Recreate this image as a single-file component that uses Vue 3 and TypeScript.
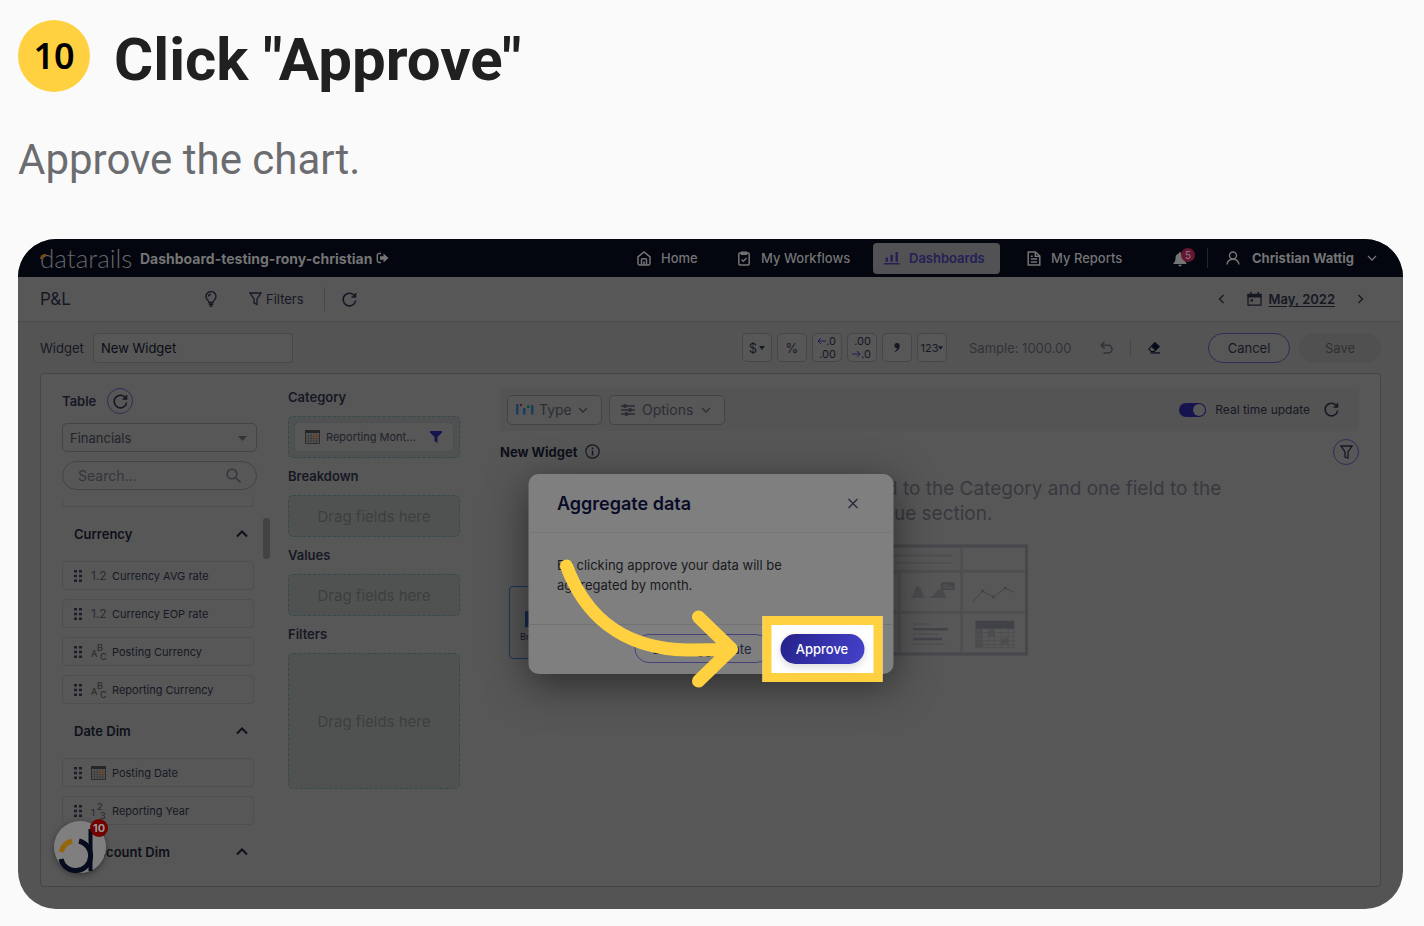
<script setup lang="ts">
import { ref } from 'vue'

type FieldKind = 'decimal' | 'text' | 'date' | 'number'
interface Field { name: string; kind: FieldKind }
interface Group { name: string; fields: Field[] }
interface Zone { name: string; field?: string; tall?: boolean }

const widgetName = ref('New Widget')
const table = ref('Financials')
const search = ref('')
const realTime = ref(true)

const groups: Group[] = [
  {
    name: 'Currency',
    fields: [
      { name: 'Currency AVG rate', kind: 'decimal' },
      { name: 'Currency EOP rate', kind: 'decimal' },
      { name: 'Posting Currency', kind: 'text' },
      { name: 'Reporting Currency', kind: 'text' },
    ],
  },
  {
    name: 'Date Dim',
    fields: [
      { name: 'Posting Date', kind: 'date' },
      { name: 'Reporting Year', kind: 'number' },
    ],
  },
  { name: 'M Account Dim', fields: [] },
]

const zones: Zone[] = [
  { name: 'Category', field: 'Reporting Mont...' },
  { name: 'Breakdown' },
  { name: 'Values' },
  { name: 'Filters', tall: true },
]
</script>

<template>
  <main class="page">
    <header class="step">
      <span class="step-number">10</span>
      <h1>Click "Approve"</h1>
    </header>
    <p class="lead">Approve the chart.</p>

    <section class="shot">
      <div class="topbar">
        <a href="#" class="logo">datarails<i class="logo-arc"></i></a>
        <a href="#" class="account">Dashboard-testing-rony-christian
          <svg width="13" height="12" viewBox="0 0 13 12"><path d="M5 1.5H3A1.7 1.7 0 0 0 1.300 3.200v5.600A1.700 1.700 0 0 0 3 10.500h2" fill="none" stroke="currentColor" stroke-width="1.500"/><path d="M4 4.200h3.500V1.500L12.500 6l-5 4.500V7.800H4z" fill="currentColor"/></svg>
        </a>
        <nav class="nav">
          <a href="#" class="nav-home">
            <svg width="14" height="15" viewBox="0 0 14 15" fill="none" stroke="currentColor" stroke-width="1.500"><path d="M1 5.800 7 1l6 4.800V12.500a1.500 1.500 0 0 1-1.500 1.500h-9A1.500 1.500 0 0 1 1 12.500zM4.500 14V8.800a1 1 0 0 1 1-1h3a1 1 0 0 1 1 1V14M7 10.500V14"/></svg>
            Home
          </a>
          <a href="#" class="nav-flows">
            <svg width="14" height="15" viewBox="0 0 14 15" fill="none" stroke="currentColor" stroke-width="1.500"><rect x="1.800" y="2" width="10.400" height="12" rx="1.200"/><path d="M4.500 1.300h5v2h-5zM4.500 8.500l1.800 1.700L9.600 7"/></svg>
            My Workflows
          </a>
          <a href="#" class="nav-active">
            <svg width="16" height="14" viewBox="0 0 16 14" fill="currentColor"><path d="M0 12h15.500v1.600H0zM1.500 6.500h2.400v4.300H1.500zM6.500 3.800h2.400v7H6.500zM11.500 1h2.400v9.800h-2.400z"/></svg>
            Dashboards
          </a>
          <a href="#" class="nav-reports">
            <svg width="14" height="15" viewBox="0 0 14 15" fill="none" stroke="currentColor" stroke-width="1.500"><path d="M1.200 1h7.300L12.800 5v9H1.200zM8.300 1v4.200h4.500M3.800 5.200h2M3.800 8h6.400M3.800 11h6.400"/></svg>
            My Reports
          </a>
          <button type="button" class="bell" aria-label="Notifications">
            <svg width="14" height="16" viewBox="0 0 14 16" fill="currentColor"><path d="M7 1a1 1 0 0 1 1 1v.5c2.500.5 3.500 2.500 3.500 4.500 0 3 .8 3.800 2 5v1H.5v-1c1.200-1.200 2-2 2-5 0-2 1-4 3.500-4.500V2a1 1 0 0 1 1-1zM5.300 13.800h3.400a1.700 1.700 0 0 1-3.400 0z"/></svg>
            <span>5</span>
          </button>
          <a href="#" class="user">
            <svg width="14" height="14" viewBox="0 0 14 14" fill="none" stroke="currentColor" stroke-width="1.500"><circle cx="7" cy="4.500" r="3.500"/><path d="M1 13.500C1.500 10 4 8.300 7 8.300s5.500 1.700 6 5.200"/></svg>
            <span>Christian Wattig</span>
            <svg width="10" height="6" viewBox="0 0 10 6" fill="none" stroke="currentColor" stroke-width="1.300"><path d="m1 1 4 4 4-4"/></svg>
          </a>
        </nav>
      </div>

      <div class="subbar">
        <h2>P&amp;L</h2>
        <button type="button" class="plain" aria-label="Tips">
          <svg width="12" height="16" viewBox="0 0 12 16" fill="none" stroke="currentColor" stroke-width="1.400"><path d="M4 11.500C4 9.500 1 8.500 1 5.600a5 5 0 0 1 10 0c0 2.900-3 3.900-3 5.900zM3.800 13.200h4.400M4.500 15h3M3.500 5.500A2.500 2.500 0 0 1 6 3.200"/></svg>
        </button>
        <button type="button" class="plain filters">
          <svg width="13" height="14" viewBox="0 0 13 14" fill="none" stroke="currentColor" stroke-width="1.300"><path d="M1 1h11L8 7v5.500L5 11V7z"/></svg>
          Filters
        </button>
        <i class="rule"></i>
        <button type="button" class="plain" aria-label="Refresh">
          <svg width="15" height="15" viewBox="0 0 15 15" fill="none" stroke="currentColor" stroke-width="1.600"><path d="M13 4.500A6.300 6.300 0 1 0 13.700 8.500M13.500 1v4H9.500"/></svg>
        </button>
        <div class="month">
          <button type="button" class="plain" aria-label="Previous month"><svg width="7" height="10" viewBox="0 0 7 10" fill="none" stroke="currentColor" stroke-width="1.300"><path d="M5.500 1 1.500 5l4 4"/></svg></button>
          <button type="button" class="plain month-name">
            <svg width="15" height="14" viewBox="0 0 15 14"><path d="M1 2.500h13v10.700H1z" fill="none" stroke="currentColor" stroke-width="1.300"/><path d="M.5 2h14v3.500H.5zM3 0h1.500v3H3zM10.500 0H12v3h-1.500zM3.500 7.200H6v2.300H3.500z" fill="currentColor"/></svg>
            <u>May, 2022</u>
          </button>
          <button type="button" class="plain" aria-label="Next month"><svg width="7" height="10" viewBox="0 0 7 10" fill="none" stroke="currentColor" stroke-width="1.300"><path d="m1.500 1 4 4-4 4"/></svg></button>
        </div>
      </div>

      <div class="tools">
        <label for="widget-name">Widget</label>
        <input id="widget-name" v-model="widgetName" type="text">
        <div class="formats">
          <button type="button" aria-label="Currency">$<svg width="6" height="4" viewBox="0 0 6 4" fill="currentColor"><path d="M0 0h6L3 4z"/></svg></button>
          <button type="button" aria-label="Percent">%</button>
          <button type="button" class="decimals" aria-label="Fewer decimals">
            <span><svg width="9" height="8" viewBox="0 0 9 8" fill="none" stroke="currentColor"><path d="M9 4H1M4 1 1 4l3 3"/></svg>.0</span><span>.00</span>
          </button>
          <button type="button" class="decimals" aria-label="More decimals">
            <span>.00</span><span><svg width="9" height="8" viewBox="0 0 9 8" fill="none" stroke="currentColor"><path d="M0 4h8M5 1l3 3-3 3"/></svg>.0</span>
          </button>
          <button type="button" aria-label="Thousands separator"><svg width="6" height="9" viewBox="0 0 6 9" fill="currentColor"><path d="M3 0a2.500 2.500 0 0 1 2.700 2.800C5.700 6 3.500 8 1 9l-.4-.7C2 7.500 2.800 6.500 3 5.200A2.600 2.600 0 1 1 3 0z"/></svg></button>
          <button type="button" class="small" aria-label="Number format">123<svg width="5" height="4" viewBox="0 0 6 4" fill="currentColor"><path d="M0 0h6L3 4z"/></svg></button>
        </div>
        <span class="sample">Sample: 1000.00</span>
        <button type="button" class="plain undo" aria-label="Undo"><svg width="13" height="13" viewBox="0 0 13 13" fill="none" stroke="currentColor" stroke-width="1.500"><path d="M4.500 1 1.200 4.300l3.300 3.300M1.200 4.300h7a3.800 3.800 0 0 1 0 7.700H3.500"/></svg></button>
        <i class="rule short"></i>
        <button type="button" class="plain erase" aria-label="Clear"><svg width="14" height="13" viewBox="0 0 14 13"><path d="M7.800.7 13 5.400 7.500 11H4L1 8.200z" fill="currentColor"/><path d="M4.300 6 2.500 8.200l2 1.700h2L7.800 9z" fill="#575757"/><path d="M3.500 11.300H13v1.300H3.500z" fill="currentColor"/></svg></button>
        <button type="button" class="pill">Cancel</button>
        <button type="button" class="pill save" disabled>Save</button>
      </div>

      <div class="panel">
        <aside class="fields">
          <div class="table-label">
            <label for="table-name">Table</label>
            <button type="button" class="round" aria-label="Reload table"><svg width="15" height="15" viewBox="0 0 15 15" fill="none" stroke="currentColor" stroke-width="1.600"><path d="M13 4.500A6.300 6.300 0 1 0 13.700 8.500M13.500 1v4H9.500"/></svg></button>
          </div>
          <div class="control">
            <select id="table-name" v-model="table"><option>Financials</option></select>
            <svg width="9" height="5" viewBox="0 0 9 5" fill="currentColor"><path d="M0 0h9L4.500 5z"/></svg>
          </div>
          <div class="control">
            <input v-model="search" type="search" placeholder="Search..." aria-label="Search fields">
            <svg width="16" height="16" viewBox="0 0 16 16" fill="none" stroke="currentColor" stroke-width="1.600"><circle cx="6" cy="6" r="4.800"/><path d="m9.500 9.500 5 5"/></svg>
          </div>
          <div class="list">
            <div class="stub"></div>
            <template v-for="g in groups" :key="g.name">
              <button type="button" class="group">
                {{ g.name }}
                <svg width="12" height="8" viewBox="0 0 12 8" fill="none" stroke="currentColor" stroke-width="2"><path d="m1 6.500 5-5 5 5"/></svg>
              </button>
              <ul v-if="g.fields.length">
                <li v-for="f in g.fields" :key="f.name">
                  <svg class="grip" width="8" height="12" viewBox="0 0 8 12" fill="currentColor"><path d="M0 0h3v2.500H0zM5 0h3v2.500H5zM0 4.700h3v2.500H0zM5 4.700h3v2.500H5zM0 9.400h3v2.500H0zM5 9.400h3v2.500H5z"/></svg>
                  <span class="kind">
                    <template v-if="f.kind === 'decimal'">1.2</template>
                    <svg v-else-if="f.kind === 'date'" width="15" height="14" viewBox="0 0 15 14"><path d="M.5 1h14v12.500H.5z" fill="none" stroke="#2d2d2d"/><path d="M0 0h15v3H0z" fill="#262626"/><path d="M1 6h13M1 8.500h13M1 11h13M3.500 3v10M6.200 3v10M9 3v10M11.700 3v10" stroke="#383838" stroke-width=".7"/><path d="M9 5.500h2.800v2.500H9z" fill="none" stroke="#7a4420"/></svg>
                    <span v-else-if="f.kind === 'text'" class="steps"><b>A</b><sup>B</sup><sub>C</sub></span>
                    <span v-else class="steps"><b>1</b><sup>2</sup><sub>3</sub></span>
                  </span>
                  {{ f.name }}
                </li>
              </ul>
            </template>
            <i class="thumb"></i>
          </div>
        </aside>

        <div class="zones">
          <template v-for="z in zones" :key="z.name">
            <h3>{{ z.name }}</h3>
            <div class="zone" :class="{ tall: z.tall }">
              <div v-if="z.field" class="chip">
                <svg width="15" height="14" viewBox="0 0 15 14"><path d="M.5 1h14v12.500H.5z" fill="none" stroke="#2d2d2d"/><path d="M0 0h15v3H0z" fill="#262626"/><path d="M1 6h13M1 8.500h13M1 11h13M3.500 3v10M6.200 3v10M9 3v10M11.700 3v10" stroke="#383838" stroke-width=".7"/><path d="M9 5.500h2.800v2.500H9z" fill="none" stroke="#7a4420"/></svg>
                <span>{{ z.field }}</span>
                <svg width="12" height="12" viewBox="0 0 12 12" fill="#16144e"><path d="M0 0h12v1.500L7.500 6v6L4.500 10V6L0 1.500z"/></svg>
              </div>
              <template v-else>Drag fields here</template>
            </div>
          </template>
        </div>

        <div class="preview">
          <div class="preview-bar">
            <button type="button" class="drop type">
              <svg width="18" height="11" viewBox="0 0 18 11"><path d="M0 0h2.500v10.500H0zM7 4h2.500v6.500H7zM15 1h2.500v9.500H15z" fill="#1d3a5f"/><path d="M4 0h2v2H4z" fill="#5d0d1e"/><path d="M11 1.500h2.500v2.500H11z" fill="#0d4a30"/></svg>
              Type
              <svg class="down" width="10" height="6" viewBox="0 0 10 6" fill="none" stroke="currentColor" stroke-width="1.300"><path d="m1 1 4 4 4-4"/></svg>
            </button>
            <button type="button" class="drop options">
              <svg width="14" height="12" viewBox="0 0 14 12" fill="currentColor" stroke="currentColor" stroke-width="1.300"><path d="M0 2h14M0 6h14M0 10h14"/><circle cx="4" cy="2" r="1.300"/><circle cx="9" cy="6" r="1.300"/><circle cx="5.500" cy="10" r="1.300"/></svg>
              Options
              <svg class="down" width="10" height="6" viewBox="0 0 10 6" fill="none" stroke="currentColor" stroke-width="1.300"><path d="m1 1 4 4 4-4"/></svg>
            </button>
            <label class="switch"><input v-model="realTime" type="checkbox">Real time update</label>
            <button type="button" class="plain" aria-label="Update now"><svg width="15" height="15" viewBox="0 0 15 15" fill="none" stroke="currentColor" stroke-width="1.600"><path d="M13 4.500A6.300 6.300 0 1 0 13.700 8.500M13.500 1v4H9.500"/></svg></button>
          </div>
          <div class="preview-title">
            <h3>New Widget</h3>
            <svg width="15" height="15" viewBox="0 0 15 15" fill="none" stroke="currentColor" stroke-width="1.200"><circle cx="7.500" cy="7.500" r="6.700"/><path d="M7.500 6.500v5M7.500 3.500v1.700" stroke-width="1.500"/></svg>
            <button type="button" class="round" aria-label="Filter widget"><svg width="13" height="14" viewBox="0 0 13 14" fill="none" stroke="currentColor" stroke-width="1.300"><path d="M1 1h11L8 7v6L5 12V7z"/></svg></button>
          </div>
          <p class="hint">Please drag at least one field to the Category and one field to the<br>Value section.</p>
          <div class="samples">
            <button type="button" class="sample-card">
              <svg width="40" height="16" viewBox="0 0 40 16" fill="#152a4d"><path d="M0 0h8v16H0zM14 5h8v11h-8zM28 2h8v14h-8z"/></svg>
              Breakdown
            </button>
            <svg class="art" width="196" height="112" viewBox="0 0 198 112">
              <g fill="none" stroke="#48484c"><path d="M1.500 1.500h195v109H1.500z" stroke-width="3"/><path d="M3 27h192M3 68.500h192M68 27v82M131 3v106" stroke="#4f4f52" stroke-width="3"/></g>
              <path d="M12 11h110M12 18.500h110" stroke="#505052" stroke-width="2.500"/>
              <path d="M79 54c5-2 4-13 8-12s4 11 8 12zM97 54c8-2 7-8 12-9s4 6 7 9z" fill="#494a4d"/>
              <rect x="110" y="38" width="14" height="8" rx="2" fill="#444549"/><path d="M112 41h6M112 43.500h10" stroke="#57575a"/>
              <path d="m142 58 10-11 11 6 12-9 8 4" fill="none" stroke="#444" /><g fill="#434345"><circle cx="152" cy="47" r="1.500"/><circle cx="163" cy="53" r="1.500"/><circle cx="175" cy="44" r="1.500"/></g>
              <path d="M82 85.500h35M82 95.500h29" stroke="#434449" stroke-width="2.500"/><path d="M82 80.500h17M82 90.500h26M82 100.500h32" stroke="#505052" stroke-width="2"/>
              <path d="M145 77h39v8h-39z" fill="#414247"/><path d="M145 85h7v19h-7zM158 85h6v8h-6zM171 95h7v6h-7z" fill="#4e4e51"/>
              <path d="M145.500 85v19h38V85M152 85v19M158 85v19M164 85v19M171 85v19M178 85v19M145 89h39M145 93h39M145 97h39M145 101h39" fill="none" stroke="#4c4c4e" stroke-width=".6"/>
            </svg>
          </div>
        </div>
      </div>

      <button type="button" class="chat" aria-label="Open help">
        <svg width="52" height="52" viewBox="0 0 52 52" fill="none"><circle cx="26" cy="26" r="26" fill="#7f7f7f"/><g stroke-width="5"><path d="M7 31A16 16 0 0 1 18 20" stroke="#95650c"/><path d="M25 20A15 15 0 1 1 7 38" stroke="#060c1d"/><path d="M36.500 8v42" stroke="#060c1d" stroke-width="4"/></g></svg>
        <span>10</span>
      </button>

      <div class="modal" role="dialog" aria-labelledby="modal-title">
        <div class="modal-head">
          <h2 id="modal-title">Aggregate data</h2>
          <button type="button" class="plain" aria-label="Close"><svg width="11" height="11" viewBox="0 0 11 11" stroke="currentColor" stroke-width="1.300"><path d="m1 1 9 9M10 1l-9 9"/></svg></button>
        </div>
        <p>By clicking approve your data will be aggregated by month.</p>
        <div class="modal-foot">
          <button type="button" class="decline">Don't aggregate</button>
          <span class="focus"><button type="button" class="approve">Approve</button></span>
        </div>
        <svg class="arrow" width="365" height="200" viewBox="0 0 365 200"><path d="M38 92C55 138 91 175 159 176Q181 176 202 175M170 143l33 32-33 32"/></svg>
      </div>
    </section>
  </main>
</template>

<style>
body { margin: 0; background: #fafafa; }
</style>

<style scoped>
* { box-sizing: border-box; }
.page { padding: 20px 21px 17px 18px; font-family: Inter, "Open Sans", sans-serif; font-size: 13px; }
h1, h2, h3, p, ul { margin: 0; padding: 0; }
button, input, select { font: inherit; color: inherit; }
button { cursor: pointer; }
a { color: inherit; text-decoration: none; }
svg { display: block; flex: none; }

.step { display: flex; align-items: center; gap: 24px; height: 72px; }
.step-number { display: grid; place-items: center; width: 72px; height: 72px; border-radius: 50%; background: #ffd140; color: #000; font: 600 36px/40px "Noto Sans", sans-serif; }
h1 { color: #202020; font: 700 60px/72px Roboto, sans-serif; padding-top: 8px; }
.lead { margin: 43px 0 55px; color: #6b6c70; font: 400 42px/49px Roboto, sans-serif; }

.shot { position: relative; overflow: hidden; padding-bottom: 22px; border-radius: 38px; background: #545454; color: #161824; }
.topbar { display: flex; align-items: center; height: 38px; padding: 0 26px 0 22px; background: #03050f; color: #747474; }
.logo { position: relative; width: 100px; font: 300 26px/36px Lato, sans-serif; color: #666; }
.logo-arc { position: absolute; left: 0; top: 14px; width: 6px; height: 5px; border: solid #7a4d08; border-width: 2px 0 0 2px; border-radius: 6px 0 0; }
.account { display: flex; align-items: center; gap: 4px; font-size: 14px; font-weight: 700; white-space: nowrap; }
.nav { display: flex; align-items: center; margin-left: auto; font-weight: 500; white-space: nowrap; }
.nav a { display: flex; align-items: center; gap: 10px; }
.nav .nav-home { width: 100px; }
.nav .nav-flows { width: 136px; }
.nav .nav-active { width: 127px; height: 31px; padding-left: 11px; gap: 9px; border-radius: 4px; background: #525255; color: #242055; font-weight: 600; }
.nav .nav-reports { width: 146px; margin-left: 27px; }
.bell { position: relative; width: 35px; height: 20px; padding: 0; border: 0; border-right: 1px solid #24262e; background: none; text-align: left; }
.bell svg { margin-top: 2px; }
.bell span { position: absolute; left: 8px; top: 0; width: 14px; height: 14px; border-radius: 50%; background: #651632; color: #8a7078; font-size: 10px; line-height: 14px; text-align: center; }
.nav .user { width: 169px; padding-left: 18px; gap: 12px; font-weight: 700; }
.user svg:last-child { margin-left: auto; }

.plain { display: flex; align-items: center; padding: 0; border: 0; background: none; }
.rule { width: 1px; height: 24px; background: #44474e; }
.subbar { display: flex; align-items: center; height: 45px; padding: 0 39px 0 22px; border-bottom: 1px solid #4c4c4c; background: #575757; }
.subbar h2 { width: 165px; font-size: 17px; font-weight: 400; }
.filters { gap: 4px; width: 75px; margin-left: 32px; }
.subbar .rule { margin-right: 17px; }
.month { display: flex; align-items: center; gap: 22px; margin-left: auto; }
.month-name { gap: 7px; font-weight: 600; }
u { text-underline-offset: 2px; }

.tools { display: flex; align-items: center; height: 51px; padding: 0 22px; }
.tools label { width: 53px; }
.tools input { width: 200px; height: 30px; padding: 0 7px; border: 1px solid #484848; border-radius: 4px; background: #575757; color: #0b0c14; }
.formats { display: flex; gap: 5px; margin-left: auto; }
.formats button { display: flex; align-items: center; justify-content: center; gap: 2px; width: 30px; height: 29px; padding: 0; border: 1px solid #464646; border-radius: 5px; background: #575757; }
.formats .small { font-size: 11px; gap: 0; }
.formats .decimals { flex-direction: column; align-items: flex-end; gap: 0; padding-right: 5px; font-size: 11px; line-height: 13px; }
.decimals span { display: flex; align-items: center; height: 13px; }
.decimals svg { color: #1f1c58; }
.sample { width: 131px; margin-left: 22px; color: #313238; }
.undo { width: 30px; color: #30323b; }
.short { height: 18px; margin-right: 16px; }
.erase { width: 61px; color: #090b1a; }
.pill { width: 82px; height: 30px; border: 1px solid #2f2c55; border-radius: 15px; background: #575757; }
.save { margin-left: 9px; border-color: #505050; background: #505050; color: #303030; }

.panel { display: grid; grid-template-columns: 208px 172px 1fr; column-gap: 18px; margin: 0 22px; padding: 5px 21px 7px; border: 1px solid #454545; border-radius: 4px; background: #575757; }
.fields { padding-top: 9px; }
.table-label { display: flex; align-items: center; gap: 11px; font-weight: 600; }
.round { display: grid; place-items: center; width: 26px; height: 26px; padding: 0; border: 1px solid #2f2c55; border-radius: 50%; background: none; }
.control { position: relative; width: 195px; margin-top: 9px; color: #34353a; }
.control select, .control input { display: block; width: 100%; height: 29px; padding: 0 7px; border: 1px solid #444; border-radius: 5px; background: none; appearance: none; color: #22232a; outline: 0; }
.control input { padding: 0 36px 0 15px; border-radius: 15px; font-size: 14px; }
.control input::placeholder { color: #34353a; opacity: 1; }
.control svg { position: absolute; right: 10px; top: 13px; }
.control input + svg { right: 15px; top: 7px; }
.list { position: relative; width: 208px; margin-top: 8px; }
.stub { width: 192px; height: 9px; border: 1px solid #4e4e4e; border-top: 0; border-radius: 0 0 4px 4px; }
.group { display: flex; align-items: center; justify-content: space-between; width: 192px; height: 54px; padding: 0 6px 0 12px; border: 0; background: none; color: #0e101a; font-weight: 600; }
ul { display: grid; gap: 9px; width: 192px; list-style: none; }
li { display: flex; align-items: center; height: 29px; padding-left: 11px; border: 1px solid #4e4e4e; border-radius: 4px; font-size: 11px; }
.grip { color: #1d1c2a; }
.kind { width: 30px; padding-left: 9px; color: #2c2c2e; font-size: 12px; }
.steps { position: relative; display: block; width: 16px; height: 16px; }
.steps b, .steps sup, .steps sub { position: absolute; font-size: 9px; font-weight: 500; line-height: 9px; }
.steps b { left: 0; top: 5px; }
.steps sup { left: 6px; top: -1px; }
.steps sub { left: 9px; top: 8px; }
.thumb { position: absolute; right: 0; top: 20px; width: 7px; height: 41px; border-radius: 3px; background: #434343; }

.zones h3 { height: 37px; font-size: 13px; font-weight: 600; line-height: 37px; }
.zone { display: grid; place-items: center; height: 42px; border: 1px dashed #354a50; border-radius: 5px; background: #505251; color: #3c3e40; font-size: 15px; }
.tall { height: 136px; }
.chip { display: flex; align-items: center; gap: 6px; width: 160px; height: 30px; padding: 0 11px 0 10px; border: 1px solid #4c5050; border-radius: 5px; background: #575757; color: #20222c; font-size: 11px; }
.chip svg:last-child { margin-left: auto; }

.preview { padding: 9px 0 0 22px; min-width: 0; }
.preview-bar { display: flex; align-items: center; gap: 7px; height: 43px; padding: 0 20px 0 7px; border-radius: 4px; background: #545454; }
.drop { display: flex; align-items: center; gap: 5px; height: 30px; padding: 0 13px 0 8px; border: 1px solid #444; border-radius: 5px; background: #575757; color: #2b2d35; font-size: 14px; }
.type { width: 95px; }
.options { width: 116px; gap: 7px; padding-left: 11px; }
.down { margin-left: auto; }
.switch { display: flex; align-items: center; gap: 9px; margin-left: auto; margin-right: 7px; font-size: 12px; }
.switch input { display: flex; width: 27px; height: 14px; margin: 0; padding: 1px; border-radius: 7px; background: #16144e; appearance: none; }
.switch input::after { content: ""; width: 12px; height: 12px; border-radius: 50%; background: #575757; }
.switch input:checked::after { margin-left: 13px; }
.preview-title { display: flex; align-items: center; gap: 7px; height: 41px; }
.preview-title h3 { font-size: 13px; font-weight: 700; color: #0e101a; }
.preview-title .round { margin-left: auto; }
.hint { margin-top: 4px; color: #38393f; font-size: 19px; line-height: 25px; text-align: center; white-space: nowrap; }
.samples { display: grid; grid-template-columns: 1fr auto 1fr; height: 115px; margin-top: 18px; }
.sample-card { display: flex; flex-direction: column; align-self: end; justify-content: center; gap: 4px; width: 92px; height: 73px; margin-left: 9px; padding: 8px 0 0 10px; border: 1px solid #1c355c; border-radius: 4px; background: none; font-size: 9px; text-align: left; }
.sample-card svg { margin-left: 5px; }

.chat { position: absolute; left: 36px; bottom: 36px; width: 52px; height: 52px; padding: 0; border: 0; border-radius: 50%; background: none; box-shadow: 0 2px 6px rgba(0, 0, 0, .4); }
.chat span { position: absolute; right: -2px; top: -2px; width: 18px; height: 18px; border-radius: 50%; background: #720000; color: #999; font-size: 11px; font-weight: 700; line-height: 18px; text-align: center; }

.modal { position: absolute; left: 50%; top: 50%; width: 365px; height: 200px; transform: translate(-50%, -50%); border-radius: 10px; background: #7f7f7f; box-shadow: 0 10px 40px rgba(0, 0, 0, .5); }
.modal-head { display: flex; align-items: center; justify-content: space-between; height: 59px; padding: 0 35px 0 29px; border-bottom: 1px solid #777; color: #26283a; }
.modal-head h2 { font-size: 18px; font-weight: 600; color: #090b27; }
.modal p { height: 91px; padding: 22px 70px 0 29px; color: #18191d; line-height: 20px; }
.modal-foot { display: flex; align-items: center; justify-content: flex-end; gap: 10px; height: 50px; padding: 0 29px 2px 0; border-top: 1px solid #717175; }
.decline { width: 136px; height: 29px; padding: 0; border: 1px solid #45427a; border-radius: 15px; background: none; color: #24263a; white-space: nowrap; }
.focus { position: relative; display: flex; }
.focus::before { content: ""; position: absolute; inset: -18px; border: 9px solid #ffd140; background: #fff; }
.approve { position: relative; width: 84px; height: 30px; padding: 0; border: 0; border-radius: 15px; background: linear-gradient(110deg, #25228a, #4642cc); box-shadow: 0 3px 8px rgba(0, 0, 0, .15); color: #fff; font-weight: 500; }
.arrow { position: absolute; inset: 0; overflow: visible; fill: none; stroke: #ffd140; stroke-width: 13; stroke-linecap: round; stroke-linejoin: round; pointer-events: none; }
</style>
